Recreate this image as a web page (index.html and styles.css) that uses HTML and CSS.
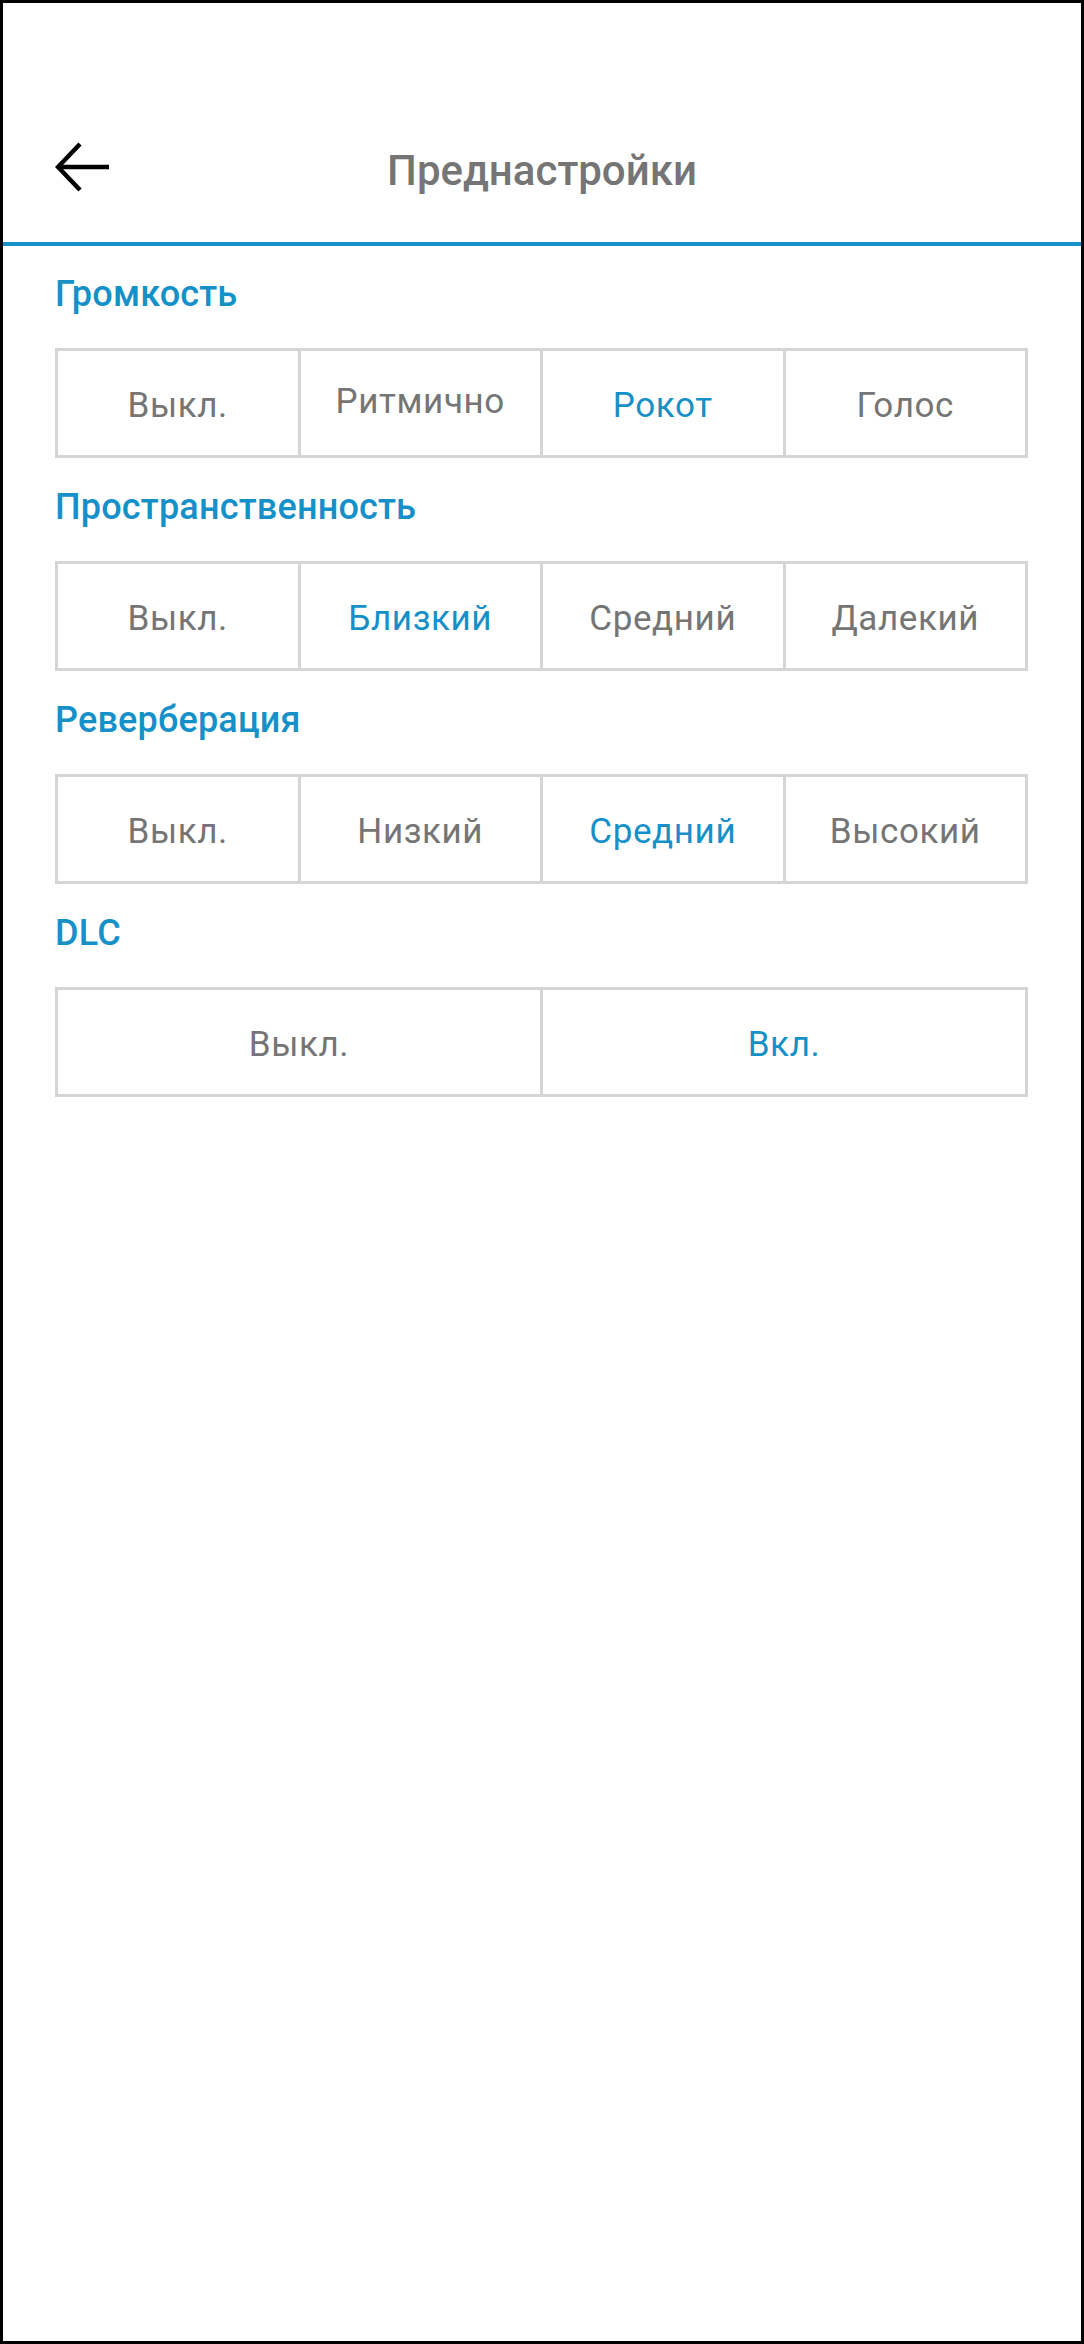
FILE: index.html
```html
<!DOCTYPE html>
<html lang="ru">
<head>
    <meta charset="UTF-8">
    <meta name="viewport" content="width=device-width, initial-scale=1.0">
    <title>Преднастройки</title>
    <link rel="stylesheet" href="styles.css">
</head>
<body>

<div class="screen">
    <div class="toolbar">
        <div class="back">
            <svg width="56" height="52" viewBox="0 0 56 52">
                <polyline points="25,3 3,26 25,49" fill="none" stroke="#000" stroke-width="4.5"/>
                <line x1="3" y1="26" x2="54" y2="26" stroke="#000" stroke-width="4.5"/>
            </svg>
        </div>
        <div class="title">Преднастройки</div>
    </div>

    <div class="content">
        <div class="section">
            <div class="section-title">Громкость</div>
            <div class="options">
                <div class="option">Выкл.</div>
                <div class="option option-raised">Ритмично</div>
                <div class="option active">Рокот</div>
                <div class="option">Голос</div>
            </div>
        </div>

        <div class="section">
            <div class="section-title">Пространственность</div>
            <div class="options">
                <div class="option">Выкл.</div>
                <div class="option active">Близкий</div>
                <div class="option">Средний</div>
                <div class="option">Далекий</div>
            </div>
        </div>

        <div class="section">
            <div class="section-title">Реверберация</div>
            <div class="options">
                <div class="option">Выкл.</div>
                <div class="option">Низкий</div>
                <div class="option active">Средний</div>
                <div class="option">Высокий</div>
            </div>
        </div>

        <div class="section">
            <div class="section-title">DLC</div>
            <div class="options">
                <div class="option">Выкл.</div>
                <div class="option active">Вкл.</div>
            </div>
        </div>
    </div>
</div>

</body>
</html>
```

FILE: styles.css
```css
body {
    margin: 0;
    padding: 0;
    font-family: Roboto, "Noto Sans", Arial, sans-serif;
    background-color: white;
}
.screen {
    box-sizing: border-box;
    height: 2344px;
    border: 3px solid black;
    background-color: white;
}
.toolbar {
    position: relative;
    display: flex;
    align-items: center;
    justify-content: center;
    height: 150px;
    margin-top: 89px;
    border-bottom: 4px solid #1590c8;
}
.back {
    position: absolute;
    left: 52px;
    top: 49px;
    width: 56px;
    height: 52px;
}
.back svg {
    display: block;
}
.title {
    font-size: 42px;
    font-weight: 500;
    color: #757575;
    padding-top: 6px;
}
.content {
    padding: 28px 53px 0 52px;
}
.section {
    margin-bottom: 29px;
}
.section-title {
    font-size: 36px;
    line-height: 41px;
    letter-spacing: 0.2px;
    font-weight: 500;
    color: #1590c8;
    margin-bottom: 33px;
}
.options {
    display: flex;
    height: 104px;
    border: 3px solid #d5d5d5;
}
.option {
    flex: 1;
    display: flex;
    align-items: center;
    justify-content: center;
    padding-top: 4px;
    font-size: 35px;
    letter-spacing: 0.6px;
    color: #757575;
    border-left: 3px solid #d5d5d5;
}
.option:first-child {
    border-left: none;
}
.option.active {
    color: #1590c8;
}
.option-raised {
    padding-top: 0;
    padding-bottom: 4px;
}
```
